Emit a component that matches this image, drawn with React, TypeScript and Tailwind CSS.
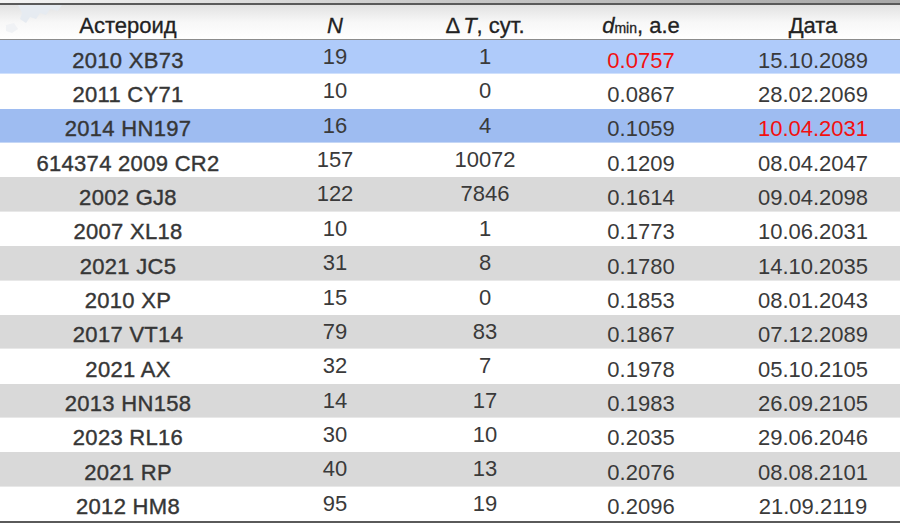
const rows: { name: string; n: string; dt: string; d: string; date: string; bg: string; redD?: boolean; redDate?: boolean }[] = [
  { name: '2010 XB73', n: '19', dt: '1', d: '0.0757', date: '15.10.2089', bg: 'bg-[#afcbfa]', redD: true },
  { name: '2011 CY71', n: '10', dt: '0', d: '0.0867', date: '28.02.2069', bg: 'bg-white' },
  { name: '2014 HN197', n: '16', dt: '4', d: '0.1059', date: '10.04.2031', bg: 'bg-[#9ebcf1]', redDate: true },
  { name: '614374 2009 CR2', n: '157', dt: '10072', d: '0.1209', date: '08.04.2047', bg: 'bg-white' },
  { name: '2002 GJ8', n: '122', dt: '7846', d: '0.1614', date: '09.04.2098', bg: 'bg-[#d9d9d9]' },
  { name: '2007 XL18', n: '10', dt: '1', d: '0.1773', date: '10.06.2031', bg: 'bg-white' },
  { name: '2021 JC5', n: '31', dt: '8', d: '0.1780', date: '14.10.2035', bg: 'bg-[#d9d9d9]' },
  { name: '2010 XP', n: '15', dt: '0', d: '0.1853', date: '08.01.2043', bg: 'bg-white' },
  { name: '2017 VT14', n: '79', dt: '83', d: '0.1867', date: '07.12.2089', bg: 'bg-[#d9d9d9]' },
  { name: '2021 AX', n: '32', dt: '7', d: '0.1978', date: '05.10.2105', bg: 'bg-white' },
  { name: '2013 HN158', n: '14', dt: '17', d: '0.1983', date: '26.09.2105', bg: 'bg-[#d9d9d9]' },
  { name: '2023 RL16', n: '30', dt: '10', d: '0.2035', date: '29.06.2046', bg: 'bg-white' },
  { name: '2021 RP', n: '40', dt: '13', d: '0.2076', date: '08.08.2101', bg: 'bg-[#d9d9d9]' },
  { name: '2012 HM8', n: '95', dt: '19', d: '0.2096', date: '21.09.2119', bg: 'bg-white' },
];

const cols = 'grid grid-cols-[256px_158px_142px_170px_174px]';

export default function App() {
  return (
    <div className="w-[900px] h-[527px] overflow-hidden bg-white text-[22px] text-[#3a3a3a] font-['Liberation_Sans',Arial,sans-serif]">
      {/* top strip */}
      <div className="h-[3px] bg-gradient-to-r from-[#f4f4f4] via-[#c8c8c8] to-[#a8a8a8]" />
      <div className="h-[2px] bg-[#5a5a5a]" />

      {/* header */}
      <div className={`${cols} relative h-[34px] bg-gradient-to-b from-[#e2e2e2] via-[#f7f7f7] to-white text-[#222] [-webkit-text-stroke:0.3px_#222]`}>
        <svg className="absolute left-0 top-0" width="70" height="32" viewBox="0 0 70 32">
          <path d="M18 0 L62 0 L58 6 L50 4 L46 10 L40 8 L36 14 L30 12 L26 18 L20 14 L22 8 Z" fill="#e6ebf1" />
          <path d="M6 20 L14 18 L18 24 L12 28 L6 26 Z" fill="#f0f2f5" />
        </svg>
        <div className="relative flex items-center justify-center pt-1">Астероид</div>
        <div className="flex items-center justify-center pt-1 italic">N</div>
        <div className="flex items-center justify-center pt-1">
          <span>Δ</span>
          <span className="italic ml-[3px]">T</span>
          <span>, сут.</span>
        </div>
        <div className="flex items-center justify-center pt-1">
          <span className="italic">d</span>
          <span className="text-[14px] self-end mb-[3px]">min</span>
          <span>, a.e</span>
        </div>
        <div className="flex items-center justify-center pt-1">Дата</div>
      </div>
      <div className="h-px bg-[#8c8c8c]" />

      {/* body */}
      {rows.map((r) => (
        <div key={r.name} className={`${cols} h-[34.36px] ${r.bg} border-b border-white/40`}>
          <div className="flex items-center justify-center pt-[3px] text-[#363636] tracking-[0.3px] [-webkit-text-stroke:0.4px_#363636]">{r.name}</div>
          <div className="flex items-center justify-center pb-[4px]">{r.n}</div>
          <div className="flex items-center justify-center pb-[4px]">{r.dt}</div>
          <div className={`flex items-center justify-center pt-[3px] ${r.redD ? 'text-[#f21010]' : ''}`}>{r.d}</div>
          <div className={`flex items-center justify-center pt-[3px] ${r.redDate ? 'text-[#f21010]' : ''}`}>{r.date}</div>
        </div>
      ))}
      <div className="h-[2px] bg-[#5a5a5a]" />
    </div>
  );
}
